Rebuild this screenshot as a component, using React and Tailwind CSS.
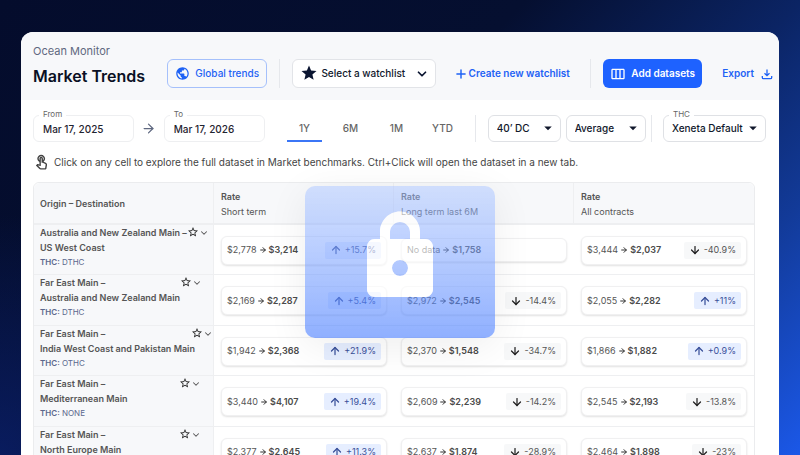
import { ArrowDown, ArrowRight, ArrowUp, ChevronDown, Plus } from "lucide-react";
import {
  MdArrowDropDown,
  MdOutlineTouchApp,
  MdOutlineViewWeek,
  MdPublic,
  MdStar,
  MdStarBorder,
} from "react-icons/md";

const columns = ["Short term", "Long term last 6M", "All contracts"];

const rows = [
  {
    from: "Australia and New Zealand Main –",
    to: "US West Coast",
    thc: "DTHC",
    rates: [
      ["$2,778", "$3,214", "+15.7%"],
      ["No data", "$1,758", null],
      ["$3,444", "$2,037", "-40.9%"],
    ],
  },
  {
    from: "Far East Main –",
    to: "Australia and New Zealand Main",
    thc: "DTHC",
    rates: [
      ["$2,169", "$2,287", "+5.4%"],
      ["$2,972", "$2,545", "-14.4%"],
      ["$2,055", "$2,282", "+11%"],
    ],
  },
  {
    from: "Far East Main –",
    to: "India West Coast and Pakistan Main",
    thc: "OTHC",
    rates: [
      ["$1,942", "$2,368", "+21.9%"],
      ["$2,370", "$1,548", "-34.7%"],
      ["$1,866", "$1,882", "+0.9%"],
    ],
  },
  {
    from: "Far East Main –",
    to: "Mediterranean Main",
    thc: "NONE",
    rates: [
      ["$3,440", "$4,107", "+19.4%"],
      ["$2,609", "$2,239", "-14.2%"],
      ["$2,545", "$2,193", "-13.8%"],
    ],
  },
  {
    from: "Far East Main –",
    to: "North Europe Main",
    thc: "DTHC",
    rates: [
      ["$2,377", "$2,645", "+11.3%"],
      ["$2,637", "$1,874", "-28.9%"],
      ["$2,464", "$1,898", "-23%"],
    ],
  },
];

function Divider() {
  return <div className="h-[29px] w-px shrink-0 bg-[#e6e8ec]" />;
}

function DateField({ id, label, value }) {
  return (
    <div className="relative">
      <label htmlFor={id} className="absolute -top-[7px] left-[6px] bg-white px-1 text-[8px] leading-[12px] text-[#666]">
        {label}
      </label>
      <input
        id={id}
        type="text"
        defaultValue={value}
        className="block h-[27px] w-[101px] rounded-md border border-[#eeeff1] bg-white px-[9px] text-[10px] font-medium text-[#1f2430]"
      />
    </div>
  );
}

function Dropdown({ id, label, value, className }) {
  return (
    <div className={"relative " + className}>
      {label && (
        <label htmlFor={id} className="absolute -top-[7px] left-[6px] bg-white px-1 text-[8px] leading-[12px] text-[#666]">
          {label}
        </label>
      )}
      <select
        id={id}
        aria-label={label ? undefined : value}
        className="block h-[27px] w-full appearance-none rounded-md border border-[#dfe1e5] bg-white pl-2 text-[10px] font-medium text-[#10172b]"
      >
        <option>{value}</option>
      </select>
      <MdArrowDropDown className="pointer-events-none absolute top-1 right-1 size-[18px] text-[#10172b]" />
    </div>
  );
}

function DownloadIcon() {
  return (
    <svg viewBox="0 0 12 12" className="size-3 fill-none stroke-current" strokeWidth="1.300" aria-hidden="true">
      <path d="M6 1.500V7.500M3.500 5.200L6 7.700L8.500 5.200M1.300 8V9.500Q1.300 10.700 2.500 10.700H9.500Q10.700 10.700 10.700 9.500V8" />
    </svg>
  );
}

function RateCard({ rate: [before, after, change] }) {
  const up = change && change.startsWith("+");
  return (
    <button
      type="button"
      className={
        "flex w-full items-center justify-between rounded-md border border-[#f0f0f1] bg-white px-[5px] text-[9px] text-[#555] shadow-[0_1px_2px_rgba(0,0,0,0.12)] " +
        (change ? "h-[29px]" : "h-6")
      }
    >
      <span className="flex items-center gap-[2px]">
        {before}
        <ArrowRight className="size-2 text-[#333]" strokeWidth={3} />
        <b className="font-semibold text-[#4a4a4a]">{after}</b>
      </span>
      {change && (
        <span
          className={
            "flex h-[17px] items-center gap-[3px] rounded-xs px-[5px] " +
            (up ? "bg-[#e6eeff] text-[#39509a]" : "bg-[#f7f8f9] text-[#555]")
          }
        >
          {up ? (
            <ArrowUp className="size-3 text-[#39509a]" strokeWidth={2.5} />
          ) : (
            <ArrowDown className="size-3 text-[#222]" strokeWidth={2.5} />
          )}
          {change}
        </span>
      )}
    </button>
  );
}

function LockBadge() {
  return (
    <div className="pointer-events-none absolute top-[154px] left-1/2 h-[152px] w-[190px] -translate-x-1/2 rounded-[10px] shadow-[0_8px_40px_rgba(0,0,0,0.07)]">
      <svg viewBox="0 0 190 152" className="size-full" role="img" aria-label="Locked">
        <defs>
          <linearGradient id="glass" x1="0" y1="0" x2="0" y2="1">
            <stop offset="0" stopColor="#a8c2ff" stopOpacity="0.5" />
            <stop offset="1" stopColor="#447aff" stopOpacity="0.6" />
          </linearGradient>
          <path
            id="padlock"
            d="M75 53V46C75 34.500 84 25.500 95 25.500S115 34.500 115 46V53H120C124.500 53 128 56.500 128 61V103C128 107.500 124.500 111 120 111H70C65.500 111 62 107.500 62 103V61C62 56.500 65.500 53 70 53ZM85 53H105V46C105 40.500 100.500 36 95 36S85 40.500 85 46ZM95 74A8 8 0 1 0 95 90A8 8 0 1 0 95 74Z"
            fillRule="evenodd"
          />
          <mask id="outside">
            <rect width="190" height="152" fill="#fff" />
            <use href="#padlock" fill="#000" />
          </mask>
        </defs>
        <rect width="190" height="152" rx="10" fill="url(#glass)" mask="url(#outside)" />
        <use href="#padlock" fill="#fff" fillOpacity="0.6" />
      </svg>
    </div>
  );
}

export default function App() {
  return (
    <div className="h-screen overflow-hidden bg-[radial-gradient(circle_at_0_100%,#0a1f6acc,transparent_240px),linear-gradient(135deg,#040c2c_0%,#050f30_42%,#0b2464_64%,#123a98_80%,#1b58e8_100%)] px-[21px] pt-8 font-['Inter',sans-serif]">
      <main className="relative min-h-screen overflow-hidden rounded-t-xl bg-white">
        <header className="bg-[#f7f8fa] py-3 pr-[6px] pl-3">
          <p className="text-[11px] leading-[15px] text-[#5f6880]">Ocean Monitor</p>
          <div className="flex items-end justify-between">
            <h1 className="text-[16px] leading-[24px] font-semibold text-[#0a1024]">Market Trends</h1>
            <button
              type="button"
              className="ml-[10px] flex h-[29px] items-center gap-[5px] rounded-md border border-[#a5c0fb] px-[7px] text-[10px] font-medium text-[#1e62f5]"
            >
              <MdPublic className="size-[15px]" />
              Global trends
            </button>
            <Divider />
            <div className="relative w-[144px]">
              <MdStar className="pointer-events-none absolute top-[5px] left-2 size-[18px] text-[#0a1430]" />
              <select
                aria-label="Watchlist"
                className="block h-[29px] w-full appearance-none rounded-md border border-[#e2e4e8] bg-white pl-7 text-[10px] font-medium text-[#10172b]"
              >
                <option>Select a watchlist</option>
              </select>
              <ChevronDown className="pointer-events-none absolute top-2 right-[7px] size-[14px] text-[#0a1430]" strokeWidth={3} />
            </div>
            <button type="button" className="ml-[5px] flex h-[29px] items-center gap-px text-[10px] font-semibold text-[#1e62f5]">
              <Plus className="size-[14px]" strokeWidth={2.5} />
              Create new watchlist
            </button>
            <div className="ml-2">
              <Divider />
            </div>
            <button
              type="button"
              className="flex h-[29px] items-center gap-[5px] rounded-md bg-[#1e62ff] px-[7px] text-[10px] font-semibold text-white"
            >
              <MdOutlineViewWeek className="size-4" />
              Add datasets
            </button>
            <button type="button" className="ml-2 flex h-[29px] items-center gap-[7px] text-[10px] font-semibold text-[#1e62f5]">
              Export
              <DownloadIcon />
            </button>
          </div>
        </header>

        <div className="flex items-center justify-between pt-[15px] pr-[13px] pl-3">
          <DateField id="from" label="From" value="Mar 17, 2025" />
          <ArrowRight className="size-[15px] text-[#5f6880]" />
          <DateField id="to" label="To" value="Mar 17, 2026" />
          <nav className="ml-[15px] flex gap-[11px] text-[10px] font-medium text-[#666]">
            <button type="button" className="h-[27px] w-[35px] border-b-2 border-[#3b76f6] pt-px">1Y</button>
            <button type="button" className="h-[27px] w-[35px] border-b-2 border-transparent pt-px">6M</button>
            <button type="button" className="h-[27px] w-[35px] border-b-2 border-transparent pt-px">1M</button>
            <button type="button" className="h-[27px] w-[35px] border-b-2 border-transparent pt-px">YTD</button>
          </nav>
          <div className="ml-2 h-[27px] w-px bg-[#e6e8ec]" />
          <div className="ml-1 flex items-center gap-[5px]">
            <Dropdown id="size" value="40’ DC" className="w-[73px]" />
            <Dropdown id="level" value="Average" className="w-[80px]" />
            <div className="h-[27px] w-px bg-[#e6e8ec]" />
          </div>
          <Dropdown id="thc" label="THC" value="Xeneta Default" className="ml-1 w-[103px]" />
        </div>

        <p className="flex items-center gap-1 pt-[11px] pl-3 text-[10px] leading-[18px] text-[#444]">
          <MdOutlineTouchApp className="size-[17px]" />
          Click on any cell to explore the full dataset in Market benchmarks. Ctrl+Click will open the dataset in a new tab.
        </p>

        <div className="mt-[11px] mr-6 ml-3 rounded-t-md border border-[#ebecee]">
          <table className="w-full table-fixed border-separate border-spacing-0 text-left text-[9px] text-[#555]">
            <thead>
              <tr className="h-[42px] bg-[#f7f8fa]">
                <th className="rounded-tl-md border-r border-b-2 border-[#eeeff1] px-[6px] pt-[2px] font-semibold">Origin – Destination</th>
                {columns.map((name) => (
                  <th
                    key={name}
                    className="border-r border-b-2 border-[#eeeff1] px-[7px] pt-[2px] leading-[15px] font-normal last:rounded-tr-md last:border-r-0"
                  >
                    <b className="block font-semibold">Rate</b>
                    {name}
                  </th>
                ))}
              </tr>
            </thead>
            <tbody>
              {rows.map((row) => (
                <tr key={row.from + row.to} className="h-[50px] even:h-[51px]">
                  <th className="border-r border-b border-[#eeeff1] bg-[#f7f8fa] p-0 pl-[6px] text-left align-top font-semibold">
                    <div className="flex items-start">
                      <div className="min-w-[139px] leading-[15px] whitespace-nowrap">
                        {row.from}
                        <br />
                        {row.to}
                        <p className="text-[8px] font-normal text-[#5a678c]">
                          <b className="font-semibold">THC:</b> {row.thc}
                        </p>
                      </div>
                      <button type="button" aria-label="Add to watchlist" className="mt-px">
                        <MdStarBorder className="size-3 text-[#222]" />
                      </button>
                      <button type="button" aria-label="Show details" className="mt-[3px]">
                        <ChevronDown className="size-[10px]" strokeWidth={2.5} />
                      </button>
                    </div>
                  </th>
                  {row.rates.map((rate) => (
                    <td key={rate[1]} className="border-b border-[#eeeff1] px-[7px] pt-px pb-0">
                      <RateCard rate={rate} />
                    </td>
                  ))}
                </tr>
              ))}
            </tbody>
          </table>
        </div>
        <LockBadge />
      </main>
    </div>
  );
}
